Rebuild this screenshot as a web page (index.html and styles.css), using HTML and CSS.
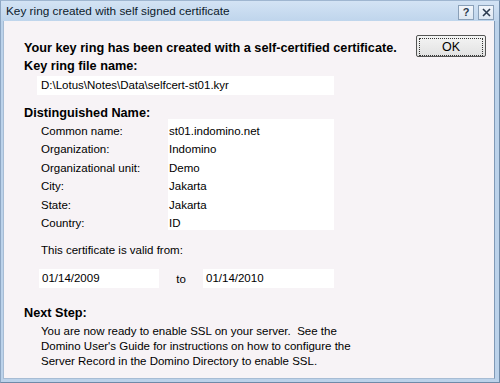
FILE: index.html
```html
<!DOCTYPE html>
<html lang="en">

<head>
    <meta charset="UTF-8">
    <title>Key ring created with self signed certificate</title>
    <link rel="stylesheet" href="styles.css">
</head>

<body>
    <div class="dialog">
        <div class="titlebar">
            <span class="title">Key ring created with self signed certificate</span>
            <div class="caption-buttons">
                <span class="cap-btn">?</span>
                <span class="cap-btn">
                    <svg width="9" height="9" viewBox="0 0 9 9">
                        <path d="M1 1 L8 8 M8 1 L1 8" stroke="#2b3a4e" stroke-width="1.6" fill="none" />
                    </svg>
                </span>
            </div>
        </div>

        <div class="body">
            <div class="top-row">
                <p class="heading lead">Your key ring has been created with a self-certified certificate.</p>
                <button class="ok-btn"><span>OK</span></button>
            </div>

            <p class="heading file-heading">Key ring file name:</p>
            <div class="field path-field">D:\Lotus\Notes\Data\selfcert-st01.kyr</div>

            <p class="heading dn-heading">Distinguished Name:</p>
            <div class="dn">
                <div class="dn-labels">
                    <span>Common name:</span>
                    <span>Organization:</span>
                    <span>Organizational unit:</span>
                    <span>City:</span>
                    <span>State:</span>
                    <span>Country:</span>
                </div>
                <div class="dn-values">
                    <span>st01.indomino.net</span>
                    <span>Indomino</span>
                    <span>Demo</span>
                    <span>Jakarta</span>
                    <span>Jakarta</span>
                    <span>ID</span>
                </div>
            </div>

            <p class="valid-label">This certificate is valid from:</p>
            <div class="dates">
                <div class="field date-from">01/14/2009</div>
                <span class="to">to</span>
                <div class="field date-to">01/14/2010</div>
            </div>

            <p class="heading next-heading">Next Step:</p>
            <p class="next-text">You are now ready to enable SSL on your server.&nbsp; See the<br>Domino User's Guide for instructions on how to configure the<br>Server Record in the Domino Directory to enable SSL.</p>
        </div>
    </div>
</body>

</html>
```

FILE: styles.css
```css
body {
    margin: 0;
    width: 500px;
    height: 383px;
    overflow: hidden;
    font-family: "Liberation Sans", Arial, sans-serif;
    font-size: 11.5px;
    color: #000;
}

.dialog {
    box-sizing: border-box;
    width: 500px;
    height: 383px;
    display: flex;
    flex-direction: column;
    background: #bcd2ea;
    border: 1px solid #6f8aa8;
    border-top-color: #9fb6d0;
    border-left-color: #8ea7c4;
}

.titlebar {
    height: 20px;
    display: flex;
    align-items: center;
    justify-content: space-between;
    padding: 0 5px 0 5px;
    background: linear-gradient(#d3e3f4, #bfd5ec);
}

.title {
    font-family: "Liberation Sans", Arial, sans-serif;
    font-size: 11.8px;
    color: #0c1a2b;
}

.caption-buttons {
    display: flex;
    gap: 4px;
    margin-top: 2px;
}

.cap-btn {
    box-sizing: border-box;
    width: 16px;
    height: 15px;
    display: flex;
    align-items: center;
    justify-content: center;
    background: linear-gradient(#f2f6fb, #dde7f2);
    border: 1px solid #8aa0b8;
    font-size: 11px;
    font-weight: bold;
    color: #2b3a4e;
}

.body {
    flex: 1;
    margin: 0 4px 3px 2px;
    padding: 14px 0 0 20px;
    background: #f7f3f6;
    border: 1px solid #a7bcd4;
    border-top: none;
    border-right-color: #8099b6;
}

p {
    margin: 0;
}

.heading {
    font-weight: bold;
    font-size: 12.7px;
    line-height: 15px;
}

.top-row {
    display: flex;
    align-items: flex-start;
    justify-content: space-between;
    padding-right: 8px;
}

.lead {
    margin-top: 6px;
}

.ok-btn {
    box-sizing: border-box;
    width: 70px;
    height: 22px;
    padding: 2px;
    background: linear-gradient(#f4f4f4, #e2e2e2);
    border: 1px solid #555;
    border-radius: 2px;
    font-family: "Liberation Sans", Arial, sans-serif;
    font-size: 12.5px;
    color: #000;
}

.ok-btn span {
    display: flex;
    align-items: center;
    justify-content: center;
    height: 100%;
    border: 1px dotted #333;
}

.file-heading {
    margin-top: 2px;
}

.field {
    box-sizing: border-box;
    background: #fff;
    height: 19px;
    line-height: 19px;
    padding-left: 4px;
}

.path-field {
    width: 297px;
    margin: 2px 0 0 13px;
}

.dn-heading {
    margin-top: 11px;
}

.dn {
    display: flex;
    margin-top: -2px;
}

.dn-labels,
.dn-values {
    display: flex;
    flex-direction: column;
    padding-top: 3px;
}

.dn-labels span,
.dn-values span {
    height: 18.4px;
    line-height: 18.4px;
}

.dn-labels {
    width: 144px;
    padding-left: 17px;
    box-sizing: border-box;
}

.dn-values {
    width: 166px;
    height: 111px;
    box-sizing: border-box;
    background: #fff;
    padding-left: 1px;
}

.valid-label {
    margin: 11px 0 0 17px;
    line-height: 15px;
}

.dates {
    display: flex;
    align-items: center;
    margin: 11px 0 0 15px;
}

.date-from {
    width: 120px;
    padding-left: 3px;
}

.to {
    width: 44px;
    text-align: center;
    padding-top: 1px;
}

.date-to {
    width: 131px;
    padding-left: 3px;
}

.next-heading {
    margin-top: 18px;
}

.next-text {
    margin: 3px 0 0 17px;
    line-height: 14.8px;
}
```
